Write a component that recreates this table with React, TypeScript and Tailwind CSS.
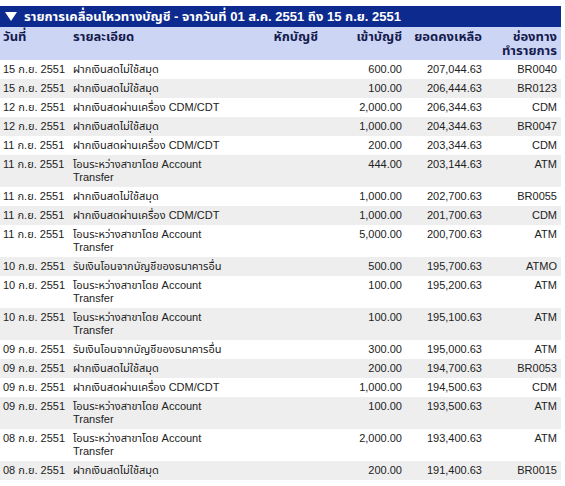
import React from 'react';

type Row = {
  date: string;
  detail: string[];
  credit: string;
  balance: string;
  channel: string;
};

const TRANSFER = ['โอนระหว่างสาขาโดย Account', 'Transfer'];
const CASH = ['ฝากเงินสดไม่ใช้สมุด'];
const CDM = ['ฝากเงินสดผ่านเครื่อง CDM/CDT'];
const OTHER_BANK = ['รับเงินโอนจากบัญชีของธนาคารอื่น'];

const rows: Row[] = [
  { date: '15 ก.ย. 2551', detail: CASH, credit: '600.00', balance: '207,044.63', channel: 'BR0040' },
  { date: '15 ก.ย. 2551', detail: CASH, credit: '100.00', balance: '206,444.63', channel: 'BR0123' },
  { date: '12 ก.ย. 2551', detail: CDM, credit: '2,000.00', balance: '206,344.63', channel: 'CDM' },
  { date: '12 ก.ย. 2551', detail: CASH, credit: '1,000.00', balance: '204,344.63', channel: 'BR0047' },
  { date: '11 ก.ย. 2551', detail: CDM, credit: '200.00', balance: '203,344.63', channel: 'CDM' },
  { date: '11 ก.ย. 2551', detail: TRANSFER, credit: '444.00', balance: '203,144.63', channel: 'ATM' },
  { date: '11 ก.ย. 2551', detail: CASH, credit: '1,000.00', balance: '202,700.63', channel: 'BR0055' },
  { date: '11 ก.ย. 2551', detail: CDM, credit: '1,000.00', balance: '201,700.63', channel: 'CDM' },
  { date: '11 ก.ย. 2551', detail: TRANSFER, credit: '5,000.00', balance: '200,700.63', channel: 'ATM' },
  { date: '10 ก.ย. 2551', detail: OTHER_BANK, credit: '500.00', balance: '195,700.63', channel: 'ATMO' },
  { date: '10 ก.ย. 2551', detail: TRANSFER, credit: '100.00', balance: '195,200.63', channel: 'ATM' },
  { date: '10 ก.ย. 2551', detail: TRANSFER, credit: '100.00', balance: '195,100.63', channel: 'ATM' },
  { date: '09 ก.ย. 2551', detail: OTHER_BANK, credit: '300.00', balance: '195,000.63', channel: 'ATM' },
  { date: '09 ก.ย. 2551', detail: CASH, credit: '200.00', balance: '194,700.63', channel: 'BR0053' },
  { date: '09 ก.ย. 2551', detail: CDM, credit: '1,000.00', balance: '194,500.63', channel: 'CDM' },
  { date: '09 ก.ย. 2551', detail: TRANSFER, credit: '100.00', balance: '193,500.63', channel: 'ATM' },
  { date: '08 ก.ย. 2551', detail: TRANSFER, credit: '2,000.00', balance: '193,400.63', channel: 'ATM' },
  { date: '08 ก.ย. 2551', detail: CASH, credit: '200.00', balance: '191,400.63', channel: 'BR0015' },
];

const cols = 'grid grid-cols-[70px_182px_70px_84px_80px_75px]';

export default function App() {
  return (
    <div
      className="w-[565px] min-h-[486px] bg-white pt-[6px] text-[11px] leading-[13px] text-[#222]"
      style={{ fontFamily: '"Liberation Sans", Tahoma, "Noto Sans Thai", "Noto Sans", "DejaVu Sans", sans-serif' }}
    >
      <div className="w-[561px]">
        {/* title bar */}
        <div className="flex h-[21px] items-center gap-[7px] bg-[#0d2b8e] pl-[5px] text-[13px] font-bold text-white">
          <svg width="12" height="9" viewBox="0 0 12 9">
            <polygon points="0,0 12,0 6,9" fill="white" />
          </svg>
          <span>รายการเคลื่อนไหวทางบัญชี - จากวันที่ 01 ส.ค. 2551 ถึง 15 ก.ย. 2551</span>
        </div>

        {/* header */}
        <div className={`${cols} h-[33px] bg-[#ccd5f4] pt-[3px] text-[13px] leading-[14px] font-bold text-[#151b4e]`}>
          <div className="pl-[3px]">วันที่</div>
          <div className="pl-[3px]">รายละเอียด</div>
          <div className="pr-[4px] text-right">หักบัญชี</div>
          <div className="pr-[4px] text-right">เข้าบัญชี</div>
          <div className="pr-[4px] text-right">ยอดคงเหลือ</div>
          <div className="pr-[4px] text-right">
            ช่องทาง
            <br />
            ทำรายการ
          </div>
        </div>

        {/* rows */}
        {rows.map((r, i) => (
          <div
            key={i}
            className={`${cols} py-[3px] whitespace-nowrap ${i % 2 === 1 ? 'bg-[#eeeeee]' : 'bg-white'}`}
          >
            <div className="pl-[3px]">{r.date}</div>
            <div className="pl-[3px]">
              {r.detail.map((line, j) => (
                <div key={j}>{line}</div>
              ))}
            </div>
            <div className="pr-[4px] text-right"></div>
            <div className="pr-[4px] text-right">{r.credit}</div>
            <div className="pr-[4px] text-right">{r.balance}</div>
            <div className="pr-[4px] text-right">{r.channel}</div>
          </div>
        ))}
      </div>
    </div>
  );
}
